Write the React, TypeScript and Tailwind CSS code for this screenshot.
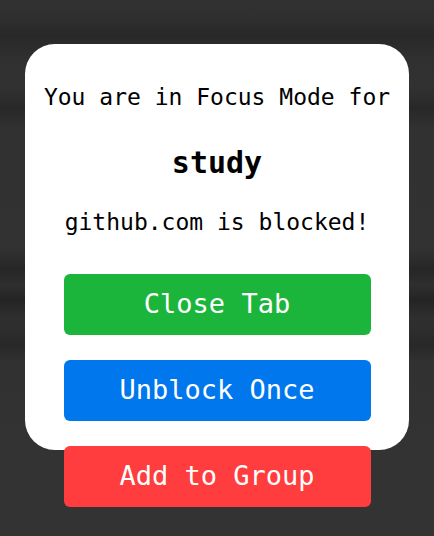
import React from "react";

export default function App() {
  return (
    <div className="relative w-[434px] h-[536px] overflow-hidden bg-[#323232] font-['DejaVu_Sans_Mono',monospace]">
      <div className="absolute inset-0 bg-[linear-gradient(180deg,#313131_0px,#2f2f2f_18px,#282828_35px,#303030_58px,#313131_88px,#282828_108px,#313131_128px,#323232_248px,#262626_270px,#2f2f2f_285px,#242424_300px,#2f2f2f_318px,#2e2e2e_330px,#282828_345px,#313131_362px,#333333_450px,#333333_536px)]" />
      <div className="relative flex flex-col items-center pt-[44px]">
        <div className="w-[384px] h-[406px] rounded-[30px] bg-white flex flex-col items-center pt-[39px]">
          <p className="text-[23px] leading-[28px] text-black">You are in Focus Mode for</p>
          <h2 className="mt-[34px] text-[30px] leading-[36px] font-bold text-black">study</h2>
          <p className="mt-[27px] text-[23px] leading-[28px] text-black">github.com is blocked!</p>
          <div className="mt-[38px] flex flex-col gap-[25px]">
            <button className="w-[307px] h-[61px] rounded-[6px] bg-[#1cb53c] text-white text-[27px]">Close Tab</button>
            <button className="w-[307px] h-[61px] rounded-[6px] bg-[#0077ed] text-white text-[27px]">Unblock Once</button>
            <button className="w-[307px] h-[61px] rounded-[6px] bg-[#ff3c3e] text-white text-[27px]">Add to Group</button>
          </div>
        </div>
      </div>
    </div>
  );
}
